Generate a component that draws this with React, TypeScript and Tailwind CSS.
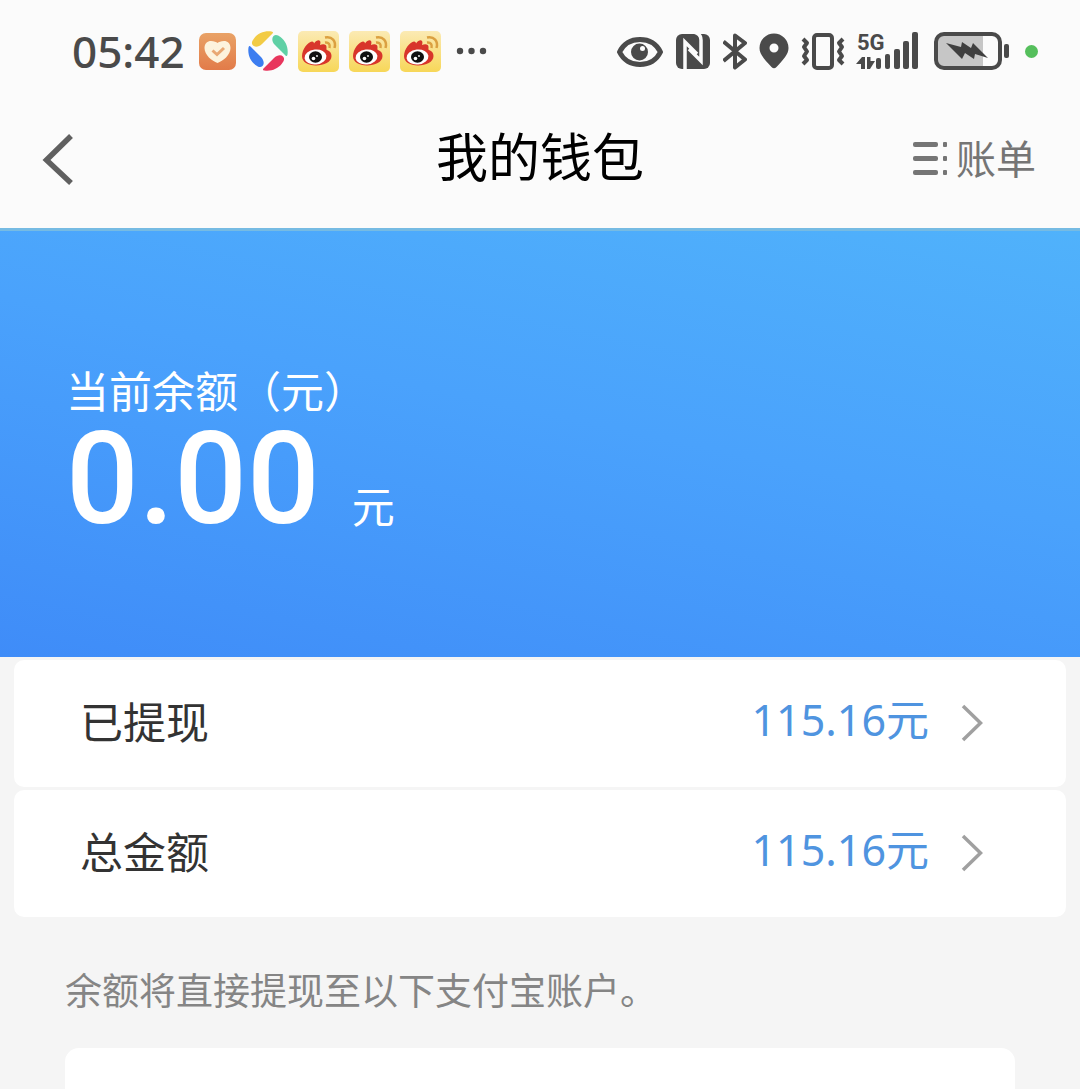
import type { ReactNode } from 'react';

const rows = [
  { label: '已提现', amount: '115.16', href: '#withdrawn' },
  { label: '总金额', amount: '115.16', href: '#total' },
];

const PETAL = 'M5 14.500 C3 12.500 4 10 6 7.500 C10 2 17 -0.500 23.500 0.500 C25 0.800 25.500 1.500 24.500 2.500 L14 13 C11 16 7 16.500 5 14.500 Z';

function HeartAppIcon() {
  return (
    <svg width="37" height="37" viewBox="0 0 37 37">
      <defs>
        <linearGradient id="heartBg" x1="0" y1="0" x2="0" y2="1">
          <stop offset="0" stopColor="#e9a266" />
          <stop offset="1" stopColor="#e27b49" />
        </linearGradient>
      </defs>
      <rect width="37" height="37" rx="7" fill="url(#heartBg)" />
      <path
        d="M18.500 30 C13 28 5.500 22 5.500 15 C5.500 10.500 8.500 8 12 8 C15 8 17.500 9 18.500 10 C19.500 9 22 8 25 8 C28.500 8 31.500 10.500 31.500 15 C31.500 22 24 28 18.500 30 Z"
        fill="#fdf3dd"
      />
      <path d="M13.500 17.500 L18 21.500 L25 15" fill="none" stroke="#e9a873" strokeWidth="3" />
    </svg>
  );
}

function PetalAppIcon() {
  return (
    <svg width="40" height="40" viewBox="0 0 40 40" className="ml-[2px]">
      <path d={PETAL} fill="#f2cb45" />
      <path d={PETAL} fill="#5fd0a5" transform="rotate(90 20 20)" />
      <path d={PETAL} fill="#e8365d" transform="rotate(180 20 20)" />
      <path d={PETAL} fill="#3c7df0" transform="rotate(270 20 20)" />
    </svg>
  );
}

function WeiboAppIcon() {
  return (
    <svg width="41" height="41" viewBox="0 0 41 41">
      <defs>
        <linearGradient id="weiboBg" x1="0" y1="0" x2="0" y2="1">
          <stop offset="0" stopColor="#fbeab4" />
          <stop offset="1" stopColor="#f7d758" />
        </linearGradient>
      </defs>
      <rect width="41" height="41" rx="5" fill="url(#weiboBg)" />
      <path
        d="M4 25 C4 18 10 11 14 10.500 C15.500 10.500 16 11.500 16 12.500 C18 9.500 21 8.500 22 10 C23 11.500 22 13 22 14 C25 12.500 29 13 28.500 16.500 C28.500 18 28 18.500 29 19 C32 20 33.500 22 33.500 25 C33.500 31 26 34.500 18 34.500 C10 34.500 4 31 4 25 Z"
        fill="#d8352b"
      />
      <ellipse cx="17.500" cy="26" rx="11" ry="7.500" fill="#fff" transform="rotate(-6 17.500 26)" />
      <ellipse cx="17.500" cy="26" rx="6.500" ry="5.800" fill="#111" />
      <circle cx="15.500" cy="27.500" r="1.800" fill="#fff" />
      <circle cx="19" cy="25" r="0.900" fill="#fff" />
      <path d="M27 11.500 C30.500 11 32.500 13.500 31.500 17" fill="none" stroke="#dba041" strokeWidth="2.500" />
      <path d="M27 6.500 C34 5 38.500 10 36.500 17" fill="none" stroke="#dba041" strokeWidth="2.500" />
    </svg>
  );
}

function EyeIcon() {
  return (
    <svg width="46" height="38" viewBox="0 0 46 38">
      <path
        d="M2.500 20 C7 11 14 7.500 23 7.500 C32 7.500 39 11 43.500 20 C39 29 32 32.500 23 32.500 C14 32.500 7 29 2.500 20 Z"
        fill="none"
        stroke="#4a4a4a"
        strokeWidth="5"
        strokeLinejoin="round"
      />
      <circle cx="22.500" cy="20" r="8.500" fill="#4a4a4a" />
      <circle cx="25.500" cy="16.500" r="2.500" fill="#fbfbfb" />
    </svg>
  );
}

function NfcIcon() {
  return (
    <svg width="36" height="38" viewBox="0 0 36 38">
      <rect x="1" y="2" width="34" height="35" rx="6" fill="#4a4a4a" />
      <path d="M10 38 V10 L22 22" fill="none" stroke="#fbfbfb" strokeWidth="3.500" />
      <path d="M19 0 C23 1 26 4 26 8 V29 L14 17" fill="none" stroke="#fbfbfb" strokeWidth="3.500" />
    </svg>
  );
}

function BluetoothIcon() {
  return (
    <svg width="24" height="38" viewBox="0 0 24 38">
      <path
        d="M0.500 9.500 L22 27.500 L12 35.500 V3.500 L22 11 L0.500 29"
        fill="none"
        stroke="#4a4a4a"
        strokeWidth="4"
        strokeLinejoin="round"
      />
    </svg>
  );
}

function PinIcon() {
  return (
    <svg width="30" height="38" viewBox="0 0 30 38">
      <path
        fillRule="evenodd"
        d="M15 1.500 A14.500 14.500 0 0 1 29.500 16 C29.500 22 25 27 17.500 35 Q15 37.500 12.500 35 C5 27 0.500 22 0.500 16 A14.500 14.500 0 0 1 15 1.500 Z M15 11.500 A4.500 4.500 0 1 0 15 20.500 A4.500 4.500 0 1 0 15 11.500 Z"
        fill="#4a4a4a"
      />
    </svg>
  );
}

function VibrateIcon() {
  return (
    <svg width="44" height="38" viewBox="0 0 44 38">
      <g fill="none" stroke="#4a4a4a" strokeWidth="4" strokeLinejoin="round">
        <rect x="13" y="3" width="18" height="33" rx="3" />
        <path d="M2 7 L6 11 L3 15 L6 19.500 L3 24 L6 28 L2 32" />
        <path d="M42 7 L38 11 L41 15 L38 19.500 L41 24 L38 28 L42 32" />
      </g>
    </svg>
  );
}

function SignalIcon() {
  return (
    <svg width="64" height="38" viewBox="0 0 64 38" fill="#4a4a4a" className="overflow-visible">
      <text x="0" y="18" className="font-['Roboto'] text-[22px] font-bold">
        5G
      </text>
      <path d="M-1 32 L5 25 H8 V37 H4 V32 Z" />
      <path d="M10 25 H13.500 V29 H18 L13 37 H10 Z" />
      <rect x="19" y="26" width="5" height="11" rx="2" />
      <rect x="28" y="22" width="5" height="15" rx="2" />
      <rect x="37" y="17" width="6" height="20" rx="2" />
      <rect x="46" y="9" width="6" height="28" rx="2" />
      <rect x="55" y="0" width="6" height="37" rx="2" />
    </svg>
  );
}

function BatteryIcon() {
  return (
    <svg width="78" height="38" viewBox="0 0 78 38">
      <rect x="3" y="2" width="64" height="34" rx="8" fill="#fbfbfb" />
      <path d="M11 2 H50 V36 H11 A8 8 0 0 1 3 28 V10 A8 8 0 0 1 11 2 Z" fill="#c6c6c6" />
      <rect x="3" y="2" width="64" height="34" rx="8" fill="none" stroke="#4a4a4a" strokeWidth="4" />
      <rect x="71" y="12" width="5" height="14" rx="2" fill="#4a4a4a" />
      <path d="M13 11 L28 15 L29 10 L38 16 L40 11 L55 26 L42 22 L41 27 L32 21 L29 27 Z" fill="#3f3f3f" />
    </svg>
  );
}

function ChevronRight() {
  return (
    <svg width="22" height="44" viewBox="0 0 22 44">
      <path d="M2 8 L19.500 25 L2 42" fill="none" stroke="#a0a0a0" strokeWidth="3.500" />
    </svg>
  );
}

function StatusBar() {
  return (
    <div className="flex items-center justify-between pt-[30px] pr-[42px] pl-[72px]">
      <div className="flex items-center gap-[10px]">
        <span className="pr-1 font-['Noto_Sans',sans-serif] text-[44px] leading-[42px] font-medium text-[#4a4a4a]">
          05:42
        </span>
        <HeartAppIcon />
        <PetalAppIcon />
        <WeiboAppIcon />
        <WeiboAppIcon />
        <WeiboAppIcon />
        <svg width="42" height="8" viewBox="0 0 42 8" fill="#4a4a4a">
          <circle cx="9" cy="4" r="3.200" />
          <circle cx="20.500" cy="4" r="3.200" />
          <circle cx="32" cy="4" r="3.200" />
        </svg>
      </div>
      <div className="flex items-center gap-3">
        <EyeIcon />
        <NfcIcon />
        <BluetoothIcon />
        <PinIcon />
        <VibrateIcon />
        <SignalIcon />
        <BatteryIcon />
        <span className="ml-[2px] size-[13px] rounded-full bg-[#55bf5c]" />
      </div>
    </div>
  );
}

function NavBar() {
  return (
    <header className="grid grid-cols-[1fr_auto_1fr] items-center px-[40px] pt-[50px] pb-[32px]">
      <button type="button" aria-label="返回" className="justify-self-start">
        <svg width="36" height="52" viewBox="0 0 36 52">
          <path d="M31 3 L6.500 27 L31 50" fill="none" stroke="#606060" strokeWidth="5.500" />
        </svg>
      </button>
      <h1 className="pb-2 text-[52px] leading-[66px] text-black">我的钱包</h1>
      <a href="#bills" className="flex items-center gap-2 justify-self-end pr-1 pb-1 text-[40px] leading-[52px] text-[#757575]">
        <svg width="36" height="40" viewBox="0 0 36 40" fill="#757575">
          <rect x="1" y="5" width="25" height="5" rx="2" />
          <rect x="1" y="19" width="25" height="5" rx="2" />
          <rect x="1" y="33" width="25" height="5" rx="2" />
          <rect x="31" y="5" width="4" height="5" rx="1" />
          <rect x="31" y="19" width="4" height="5" rx="1" />
          <rect x="31" y="33" width="4" height="5" rx="1" />
        </svg>
        账单
      </a>
    </header>
  );
}

function Amount({ children }: { children: ReactNode }) {
  return (
    <span className="font-['Noto_Sans','Noto_Sans_CJK_SC',sans-serif] text-[43px] leading-[60px] text-[#4f94e0]">
      {children}
    </span>
  );
}

export default function App() {
  return (
    <div className="min-h-screen bg-[#f5f5f5] font-['Noto_Sans_CJK_SC',sans-serif]">
      <div className="bg-[#fbfbfb]">
        <StatusBar />
        <NavBar />
      </div>

      <section className="border-t-[3px] border-[#76bbe3] bg-[linear-gradient(192deg,#50b2fb_0%,#4aa2fc_45%,#3f8cf8_100%)] pt-[134px] pb-[118px] pl-[66px] text-white">
        <p className="text-[43px] leading-[48px]">当前余额（元）</p>
        <p className="mt-[6px] flex items-baseline gap-8">
          <span className="font-['Roboto',sans-serif] text-[128px] leading-[120px] font-medium">0.00</span>
          <span className="text-[43px] leading-[48px]">元</span>
        </p>
      </section>

      <nav className="mx-[14px] mt-[3px] flex flex-col gap-[3px]">
        {rows.map((row) => (
          <a
            key={row.label}
            href={row.href}
            className="flex items-center justify-between rounded-[10px] bg-white pt-[30px] pr-[83px] pb-[37px] pl-[66px]"
          >
            <span className="text-[43px] leading-[60px] text-[#333333]">{row.label}</span>
            <span className="flex items-center gap-[32px]">
              <Amount>{row.amount}元</Amount>
              <ChevronRight />
            </span>
          </a>
        ))}
      </nav>

      <p className="mt-[46px] px-[65px] text-[37px] leading-[52px] text-[#858585]">余额将直接提现至以下支付宝账户。</p>
      <div className="mx-[65px] mt-[33px] h-[41px] rounded-t-[14px] bg-white" />
    </div>
  );
}
